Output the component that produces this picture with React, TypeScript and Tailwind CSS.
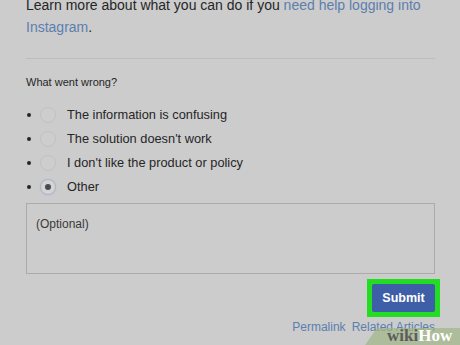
import React from 'react';

const options = [
  { label: 'The information is confusing', checked: false },
  { label: "The solution doesn't work", checked: false },
  { label: "I don't like the product or policy", checked: false },
  { label: 'Other', checked: true },
];

const Radio = ({ checked }: { checked: boolean }) => (
  <span
    className={
      'w-[16px] h-[16px] rounded-full border flex items-center justify-center ' +
      (checked ? 'border-[#aeb3c2] bg-[#d3d3d8] shadow-[0_0_2px_#b8bdd0]' : 'border-[#c2c2c2] bg-[#cdcdcd]')
    }
  >
    {checked && <span className="w-[6px] h-[6px] rounded-full bg-[#4a4a4e]" />}
  </span>
);

export default function App() {
  return (
    <div
      className="relative w-[460px] h-[345px] overflow-hidden bg-[#cccccc] text-[#262626]"
      style={{ fontFamily: '"Liberation Sans", Arial, sans-serif' }}
    >
      <div className="pl-[26px] pr-[25px]">
        <p className="-mt-[6px] text-[14px] leading-[22px]">
          Learn more about what you can do if you{' '}
          <span className="text-[#5b7fae]">need help logging into Instagram</span>.
        </p>

        <div className="mt-[20px] h-px bg-[#bdbdbd]" />

        <p className="mt-[16px] text-[11px] leading-[14px]">What went wrong?</p>

        <ul className="mt-[18px] flex flex-col gap-[8px]">
          {options.map((o) => (
            <li key={o.label} className="flex items-center h-[16px] text-[12.8px]">
              <span className="w-[4px] h-[4px] rounded-full bg-[#262626] ml-[1px] mr-[9px]" />
              <Radio checked={o.checked} />
              <span className="ml-[11px]">{o.label}</span>
            </li>
          ))}
        </ul>

        <div className="mt-[8px] h-[71px] border border-[#ababab] px-[9px] py-[11px] text-[12px] text-[#3a3a3a]">
          (Optional)
        </div>

        <div className="flex justify-end mt-[5px] mr-[-5px]">
          <div className="border-[5px] border-[#22dd22] bg-[#22dd22]">
            <button className="w-[63px] h-[28px] bg-[#3f5ea8] rounded-[2px] text-white font-bold text-[12.5px]">
              Submit
            </button>
          </div>
        </div>

        <div className="flex justify-end gap-[6px] mt-[1px] text-[12px] text-[#5b7fae]">
          <span>Permalink</span>
          <span>Related Articles</span>
        </div>
      </div>

      <div className="absolute left-[363px] top-[328px] w-[120px] h-[20px] bg-[#9fb585]/70 -skew-x-[35deg] origin-bottom-left" />
      <div
        className="absolute left-[387px] top-[327px] text-[17px] font-bold leading-[18px] whitespace-nowrap"
        style={{ fontFamily: '"Liberation Serif", serif' }}
      >
        <span className="text-[#5c5c5c]">wiki</span>
        <span className="text-white">How</span>
      </div>
    </div>
  );
}
